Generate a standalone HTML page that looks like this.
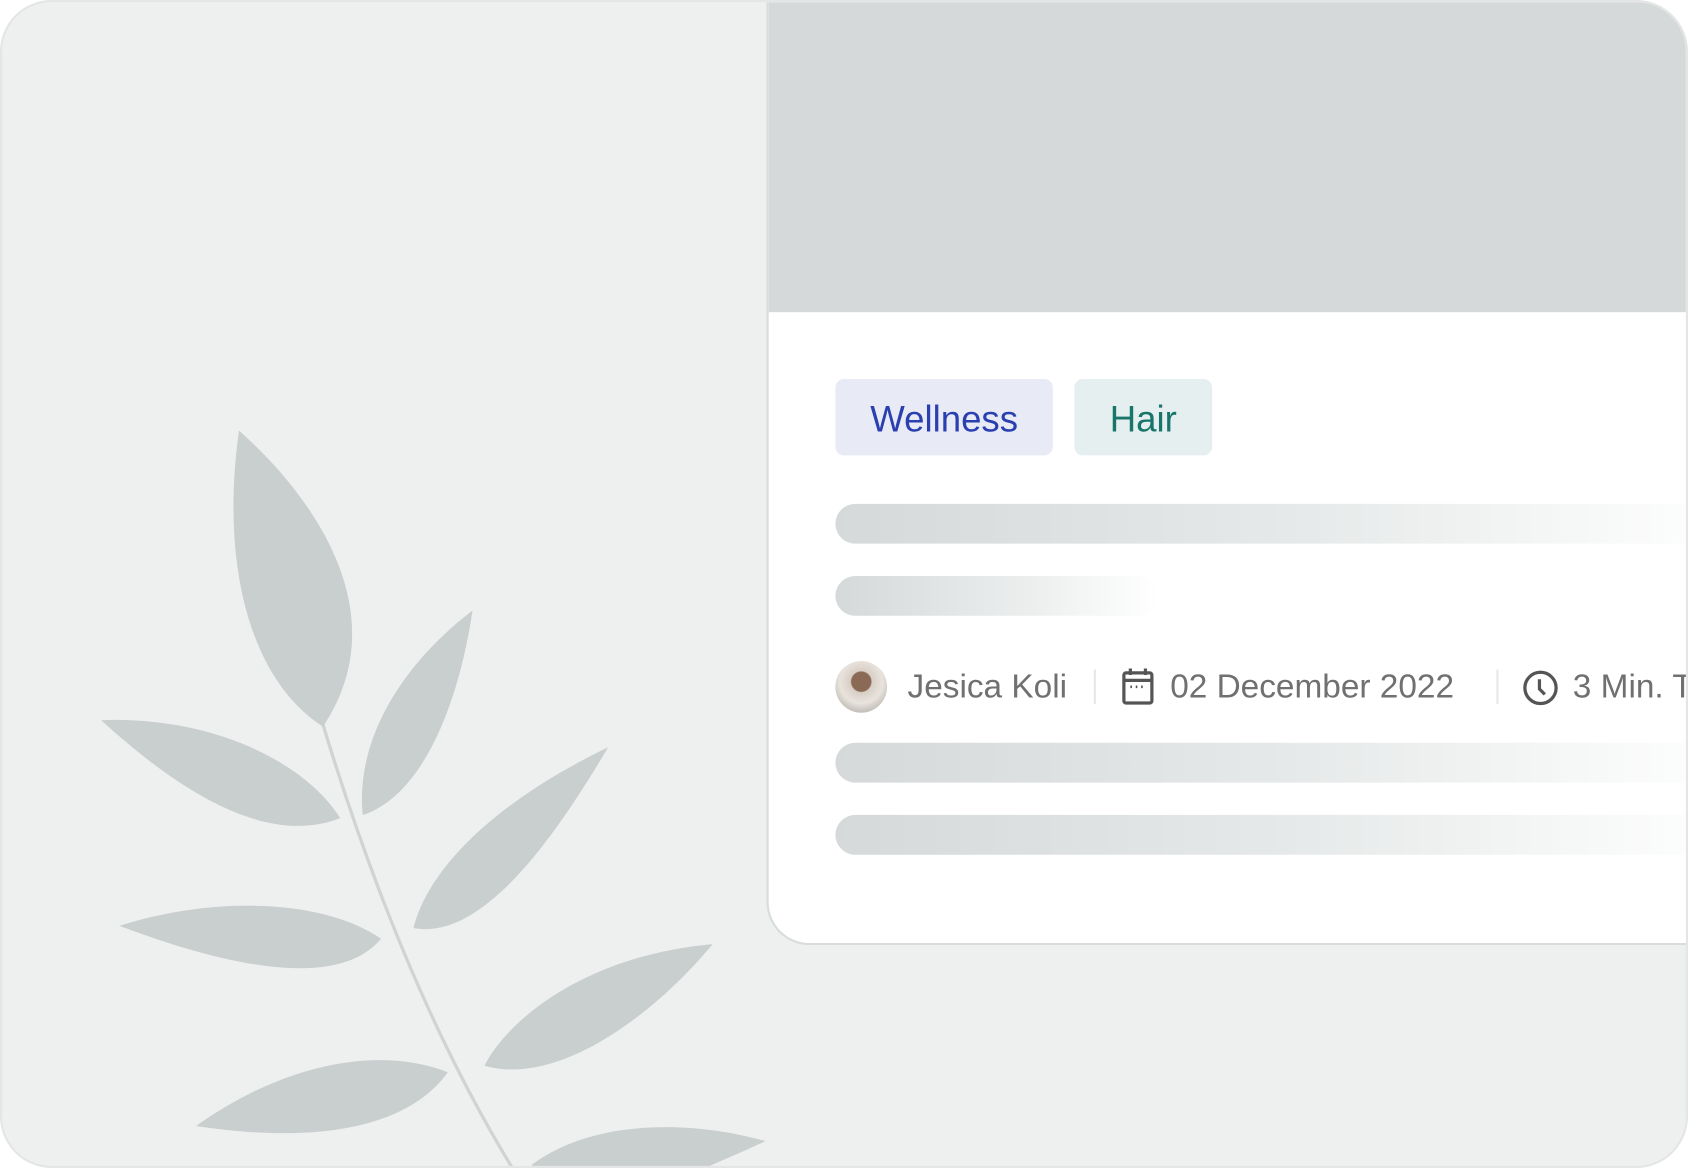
<!DOCTYPE html>
<html><head><meta charset="utf-8"><style>
html,body{margin:0;padding:0;background:#fff;}
body{width:1688px;height:1168px;overflow:hidden;}
#s{position:absolute;left:0;top:0;width:1568px;height:1085px;transform:scale(1.07653);transform-origin:0 0;}
#o{position:absolute;left:0;top:0;width:1564px;height:1081px;border:2px solid #e3e6e5;border-radius:48px;background:#eef0ef;overflow:hidden;}
#card{position:absolute;left:710px;top:0;width:900px;height:874px;background:#fff;border-left:2px solid #d8dcdc;border-bottom:2px solid #d8dcdc;border-bottom-left-radius:40px;overflow:hidden;}
#hdr{position:absolute;left:0;top:0;width:100%;height:288px;background:#d5d9da;}
.tag{position:absolute;top:350px;height:71px;border-radius:8px;font-family:"Liberation Sans",sans-serif;font-size:34px;line-height:76px;text-align:center;}
.bar{position:absolute;left:62px;height:37px;border-radius:19px;}
.meta{position:absolute;top:612px;font-family:"Liberation Sans",sans-serif;font-size:31px;color:#707070;line-height:48px;white-space:nowrap;}
.div{position:absolute;top:620px;width:2px;height:32px;background:#e6e8e8;}
</style></head><body><div id="s"><div id="o">
<svg style="position:absolute;left:-2px;top:-2px" width="1568" height="1085" viewBox="0 0 1568 1085">
<path d="M300,673 Q375,920 476,1085" stroke="#cfd3d2" stroke-width="3" fill="none"/>
<g fill="#c9cfce">
<path d="M300,675 C230,630 205,520 222,400 C290,460 370,570 300,675Z"/>
<path d="M337,757 C330,690 370,620 439,567 C425,660 390,740 337,757Z"/>
<path d="M316,760 C240,790 150,720 94,669 C200,665 285,710 316,760Z"/>
<path d="M384,862 C400,800 470,740 565,694 C520,770 450,875 384,862Z"/>
<path d="M111,860 C200,832 300,835 354,872 C310,925 190,890 111,860Z"/>
<path d="M450,990 C470,950 540,888 662,877 C610,940 520,1010 450,990Z"/>
<path d="M182,1046 C260,990 350,970 416,996 C370,1060 260,1058 182,1046Z"/>
<path d="M494,1082 C550,1040 640,1040 711,1060 C690,1070 670,1078 655,1085 L494,1085Z"/>
</g></svg>
<div id="card"><div id="hdr"></div>
<div class="tag" style="left:62px;width:202px;background:#e8eaf6;color:#2a3fb0;">Wellness</div>
<div class="tag" style="left:284px;width:128px;background:#e6efef;color:#17756a;">Hair</div>
<div class="bar" style="top:466px;width:840px;background:linear-gradient(90deg,#d5d9da,#e6e9e9 50%,#fff 100%);"></div>
<div class="bar" style="top:533px;width:300px;background:linear-gradient(90deg,#d5d9da,#eceeee 60%,#fff 100%);"></div>
<div class="bar" style="top:688px;width:840px;background:linear-gradient(90deg,#d5d9da,#e6e9e9 50%,#fff 100%);"></div>
<div class="bar" style="top:755px;width:840px;background:linear-gradient(90deg,#d5d9da,#e6e9e9 50%,#fff 100%);"></div>
<div style="position:absolute;left:62px;top:612px;width:48px;height:48px;border-radius:50%;background:radial-gradient(circle at 50% 40%,#8a6a55 0 9px,#d8cfc6 10px,#e9e3dd 20px,#bdb8b2 30px);"></div>
<div class="meta" style="left:129px;">Jesica Koli</div>
<div class="div" style="left:302px;"></div>
<svg style="position:absolute;left:328px;top:618px" width="30" height="35" viewBox="0 0 30 35" fill="none" stroke="#555" stroke-width="3"><rect x="2" y="5" width="26" height="28" rx="2"/><line x1="2" y1="12" x2="28" y2="12"/><line x1="8" y1="1" x2="8" y2="7"/><line x1="22" y1="1" x2="22" y2="7"/><g stroke-width="2.5"><line x1="8" y1="18" x2="9.5" y2="18"/><line x1="13" y1="18" x2="14.5" y2="18"/><line x1="18" y1="18" x2="19.5" y2="18"/></g></svg>
<div class="meta" style="left:373px;">02 December 2022</div>
<div class="div" style="left:676px;"></div>
<svg style="position:absolute;left:700px;top:620px" width="34" height="34" viewBox="0 0 34 34" fill="none" stroke="#555" stroke-width="3"><circle cx="17" cy="17" r="14.5"/><path d="M16 9 V18 L21 23"/></svg>
<div class="meta" style="left:747px;">3 Min. To Read</div>
</div>
</div></div></body></html>
